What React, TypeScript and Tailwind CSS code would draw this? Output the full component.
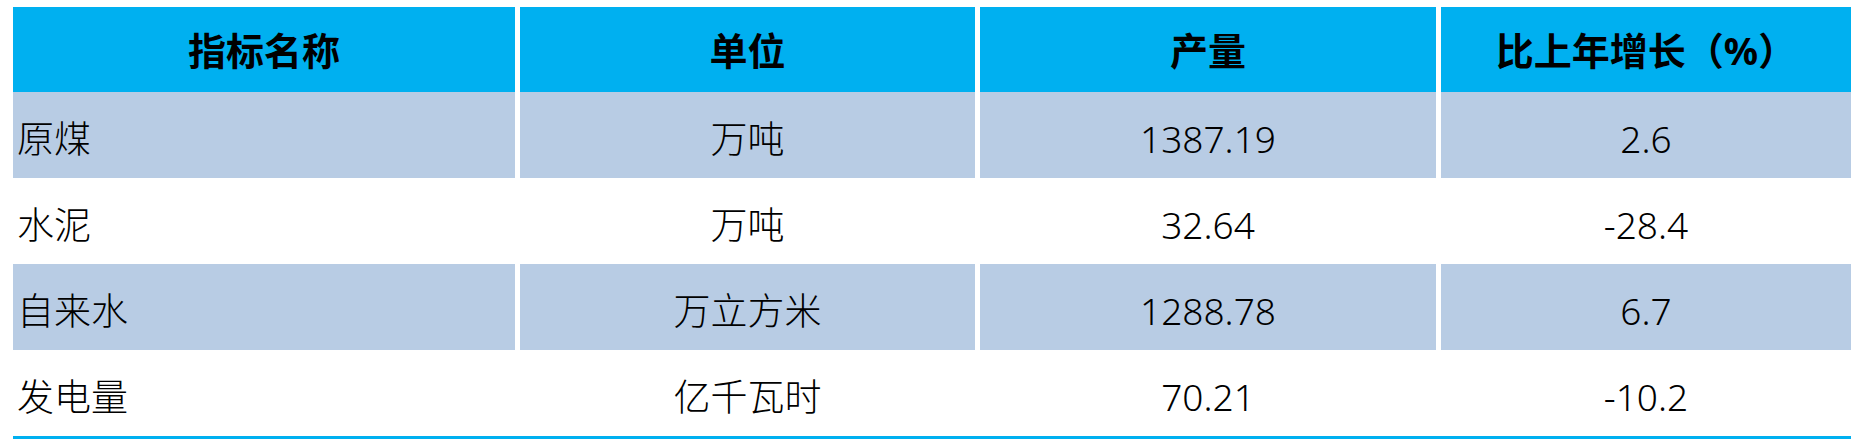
import React from "react";

interface Row {
  name: string;
  unit: string;
  output: string;
  growth: string;
}

const rows: Row[] = [
  { name: "原煤", unit: "万吨", output: "1387.19", growth: "2.6" },
  { name: "水泥", unit: "万吨", output: "32.64", growth: "-28.4" },
  { name: "自来水", unit: "万立方米", output: "1288.78", growth: "6.7" },
  { name: "发电量", unit: "亿千瓦时", output: "70.21", growth: "-10.2" },
];

const headers = ["指标名称", "单位", "产量", "比上年增长（%）"];

export default function App() {
  return (
    <div
      className="w-[1851px] h-[439px] overflow-hidden bg-white pl-[13px] pt-[7px] text-black"
      style={{ fontFamily: '"Noto Sans", "Noto Sans CJK SC", sans-serif' }}
    >
      <div className="border-b-[3px] border-[#00b0f0]">
        {/* header */}
        <div className="grid grid-cols-[502px_455px_456px_1fr] gap-x-[5px] h-[85px]">
          {headers.map((h) => (
            <div
              key={h}
              className="bg-[#00b0f0] flex items-center justify-center pt-[2px] text-[38px] font-bold"
            >
              {h}
            </div>
          ))}
        </div>

        {rows.map((row, i) => {
          const bg = i % 2 === 0 ? "bg-[#b8cce4]" : "bg-white";
          return (
            <div
              key={row.name}
              className="grid grid-cols-[502px_455px_456px_1fr] gap-x-[5px] h-[86px] text-[37px] font-light"
            >
              <div className={`${bg} flex items-center pl-[4px] pt-[8px]`}>{row.name}</div>
              <div className={`${bg} flex items-center justify-center pt-[8px]`}>{row.unit}</div>
              <div className={`${bg} flex items-center justify-center pt-[8px]`}>{row.output}</div>
              <div className={`${bg} flex items-center justify-center pt-[8px]`}>{row.growth}</div>
            </div>
          );
        })}
      </div>
    </div>
  );
}
